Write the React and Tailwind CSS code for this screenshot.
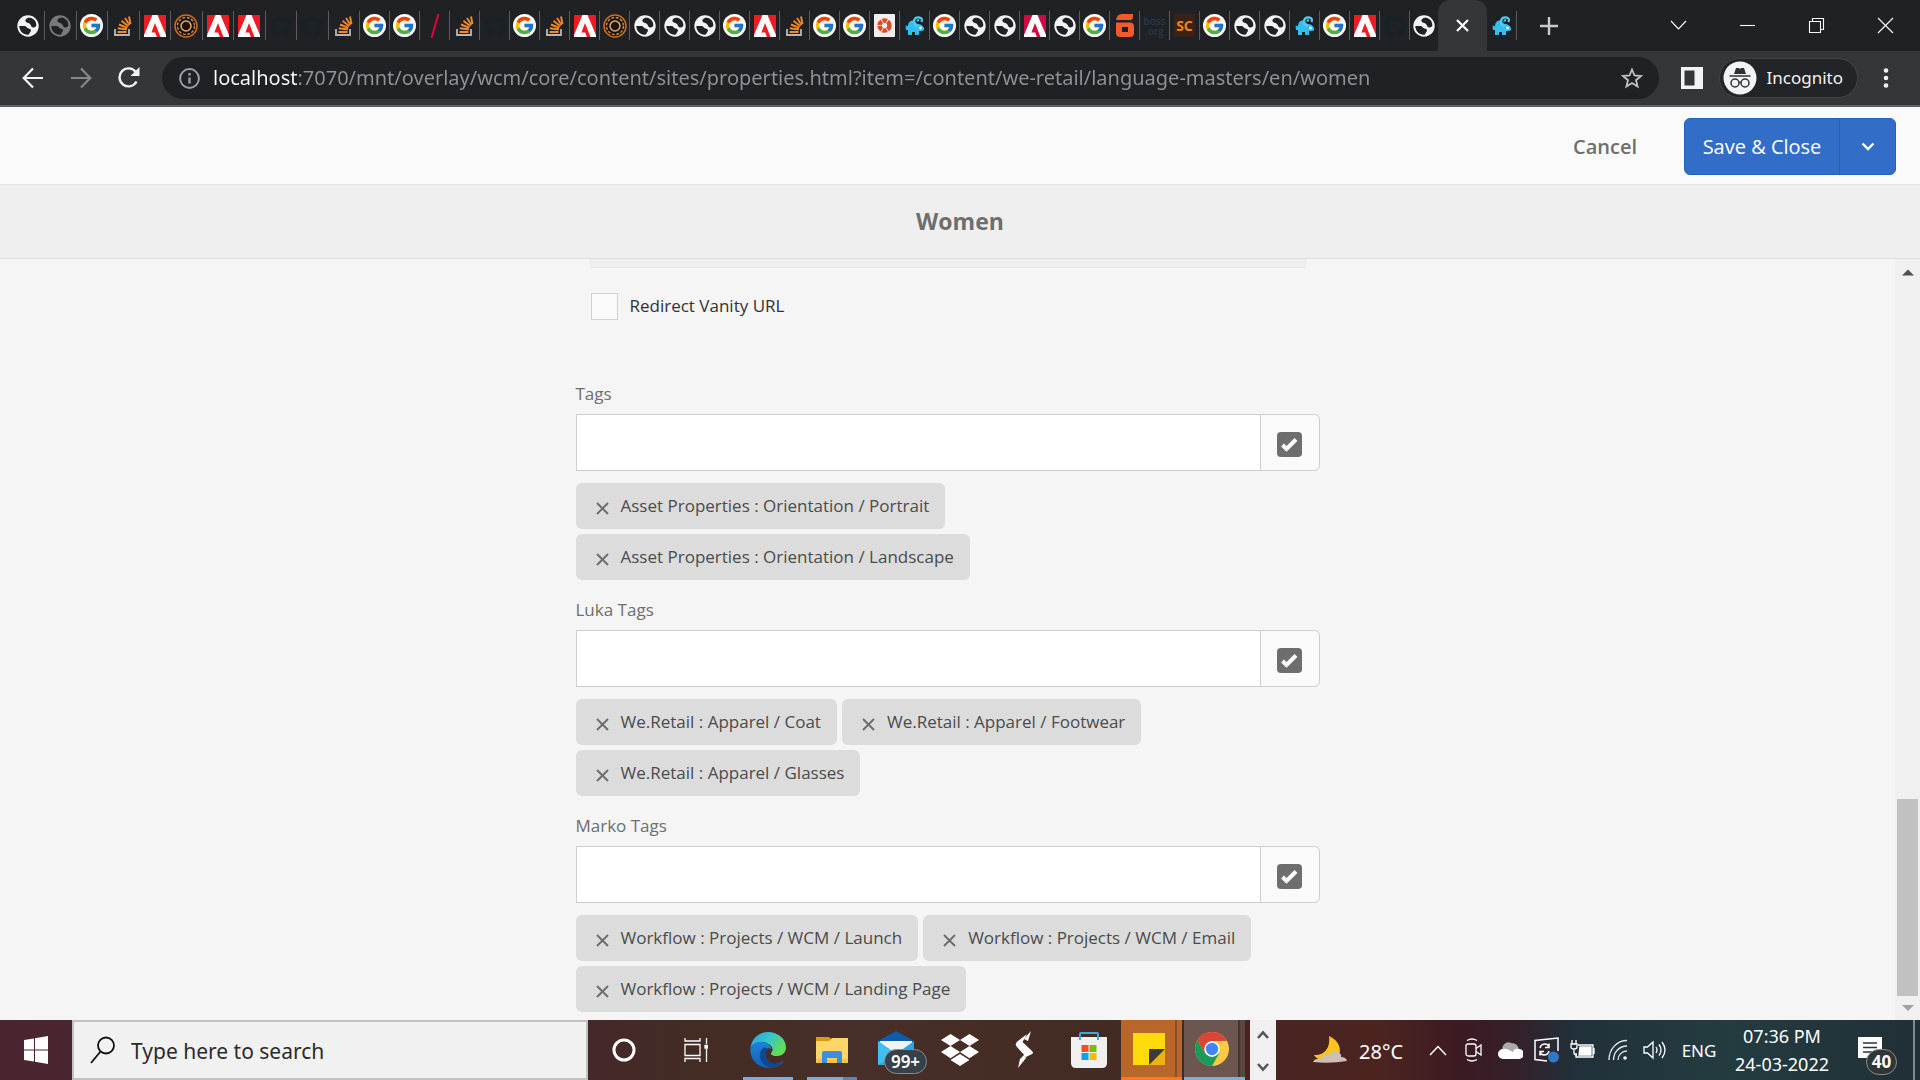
import { useState } from 'react';
import { FcGoogle } from 'react-icons/fc';
import { FaGithub, FaDropbox } from 'react-icons/fa';

const URL = 'localhost:7070/mnt/overlay/wcm/core/content/sites/properties.html?item=/content/we-retail/language-masters/en/women';

const FIRST_TABS = ['globeDim', 'google', 'stack', 'adobe', 'gold', 'adobe', 'adobe', 'github', 'github', 'stack'];

const TABS = [
  'google', 'google', 'slash', 'stack', 'github', 'google', 'stack', 'adobe', 'gold', 'globe', 'globe', 'globe',
  'google', 'adobe', 'stack', 'google', 'google', 'swirl', 'elephant', 'google', 'globe', 'globe', 'experience',
  'globe', 'google', 'bold', 'boss', 'sc', 'google', 'globe', 'globe', 'elephant', 'google', 'adobe', 'github',
];

const TAG_FIELDS = [
  { id: 'tags', label: 'Tags', tags: ['Asset Properties : Orientation / Portrait', 'Asset Properties : Orientation / Landscape'] },
  { id: 'luka', label: 'Luka Tags', tags: ['We.Retail : Apparel / Coat', 'We.Retail : Apparel / Footwear', 'We.Retail : Apparel / Glasses'] },
  { id: 'marko', label: 'Marko Tags', tags: ['Workflow : Projects / WCM / Launch', 'Workflow : Projects / WCM / Email', 'Workflow : Projects / WCM / Landing Page'] },
];

function Globe({ color = '#f1f3f4' }) {
  return (
    <svg width="22" height="22" viewBox="0 0 22 22">
      <circle cx="11" cy="11" r="10.700" fill={color} />
      <path d="M13 2.800C10 2.500 8 4.500 8.500 6.300c.5 1.700 3.500 1.500 4.500 2.700s1 3.200 3 3.400 3.300-1 3.300-2.400C19.300 6.500 17 3.500 13 2.800z" fill="#202124" />
      <path d="M2.300 11h4.700c2.800 0 2.600 2.200 4.700 2.500s3 1.700 1.800 3.200-1 2.800-2.700 3C6 19.500 2.500 16 2.300 11z" fill="#202124" />
    </svg>
  );
}

function Adobe({ color = '#ed1c24' }) {
  return (
    <svg width="22" height="22" viewBox="0 0 22 22">
      <rect width="22" height="22" fill={color} />
      <path d="M8.500 0h5l8.500 20v2H0v-2z" fill="#fff" />
      <path d="M11 8l5.500 14h-3.700l-1.600-4.500H7.400z" fill={color} />
    </svg>
  );
}

function Favicon({ kind }) {
  switch (kind) {
    case 'globe': return <Globe />;
    case 'globeDim': return <Globe color="#77797c" />;
    case 'google': return <span className="flex size-[23px] items-center justify-center rounded-full bg-white"><FcGoogle size={21} /></span>;
    case 'stack': return (
      <svg width="18" height="20" viewBox="0 0 18 20" fill="none">
        <path d="M1 13v6h14v-6" stroke="#b4b6b8" strokeWidth="1.800" />
        <path d="M3.500 16h9M3.800 12.300l9 1.200M5 8.500l8.300 3.300M7.500 4.800l6.800 5.500M11 2l4.500 7M15 .5l1.500 7.500" stroke="#f0882e" strokeWidth="1.900" />
      </svg>
    );
    case 'adobe': return <Adobe />;
    case 'experience': return <Adobe color="#cf0a43" />;
    case 'github': return <FaGithub size={22} className="text-[#182226]" />;
    case 'elephant': return (
      <svg width="20" height="20" viewBox="0 0 20 20" fill="none">
        <path d="M1 9q-1 2 0 5h2v5h4v-3h3v3h4v-4h2q4 0 3-3-2-4-6-4-3-1-3-4-7 0-7 6-1 1-2-1z" fill="#35bdee" />
        <path d="M16.500 6q1.500-4-2.500-4.700Q9 1 9 6q0 4 4 3.500M12.500 5.500q0-1.500 1.500-1" stroke="#4fcdf6" strokeWidth="2.200" />
        <circle cx="15.500" cy="12" r="1.400" fill="#dff6fd" />
      </svg>
    );
    case 'slash': return <svg width="22" height="24" viewBox="0 0 22 24"><path d="M14.500 0L7.500 24" stroke="#e4003c" strokeWidth="2" /></svg>;
    case 'gold': return (
      <svg width="24" height="24" viewBox="0 0 24 24" fill="none">
        <circle cx="12" cy="12" r="11" fill="#1a1008" stroke="#c9701a" strokeWidth="1.500" />
        <circle cx="12" cy="12" r="8.500" stroke="#b98a4c" strokeWidth="1.500" strokeDasharray="3 1.500" />
        <circle cx="12" cy="12" r="5" fill="#241204" stroke="#d8b078" strokeWidth="1.500" />
      </svg>
    );
    case 'swirl': return (
      <svg width="21" height="23" viewBox="0 0 21 23" fill="none">
        <rect width="21" height="23" rx="1" fill="#f4efec" />
        <circle cx="10.500" cy="11.500" r="5" stroke="#e2492b" strokeWidth="4.500" strokeDasharray="4.400 .84" />
      </svg>
    );
    case 'bold': return (
      <svg width="20" height="23" viewBox="0 0 20 23">
        <path d="M1 6Q2 0 7 0h11v3q0 3-3 3z" fill="#f15a29" />
        <path fillRule="evenodd" d="M1 8.500h14q4 0 4 4V19q0 4-4 4H5q-4 0-4-4zM7 13v5h6v-5z" fill="#f15a29" />
      </svg>
    );
    case 'boss': return <span className="w-[22px] text-center text-[10px] leading-[10px] font-semibold text-[#26384f]">boss .org</span>;
    case 'sc': return <span className="flex h-[23px] w-[21px] items-center justify-center bg-[#3a2216] font-['Noto_Sans'] text-[14px] font-bold text-[#f0811f]">SC</span>;
    default: return null;
  }
}

function Tab({ kind, className }) {
  return (
    <button className={`flex h-[29px] items-center justify-center overflow-hidden border-r border-[#5a5c60] ${className}`}>
      <Favicon kind={kind} />
    </button>
  );
}

function TabStrip() {
  return (
    <div className="flex h-[51px] shrink-0 items-center bg-[#202124]">
      <Tab kind="globe" className="w-[45px] pl-3" />
      <div className="flex w-[315px]">
        {FIRST_TABS.map((t, i) => <Tab key={i} kind={t} className="w-0 flex-1" />)}
      </div>
      {TABS.map((t, i) => <Tab key={i} kind={t} className="w-[30px]" />)}
      <button className="flex w-7 items-center justify-center"><Favicon kind="globe" /></button>
      <button className="flex h-full w-[49px] items-center justify-center rounded-t-xl bg-[#35363a]">
        <svg width="13" height="13" viewBox="0 0 13 13"><path d="M1 1l11 11M12 1L1 12" stroke="#fff" strokeWidth="2.200" /></svg>
      </button>
      <Tab kind="elephant" className="w-[30px]" />
      <button className="flex w-16 items-center justify-center">
        <svg width="18" height="18" viewBox="0 0 18 18"><path d="M9 0v18M0 9h18" stroke="#c8cacd" strokeWidth="2.400" /></svg>
      </button>
      <div className="ml-auto flex h-[43px]">
        <WindowButton><path d="M3 6l7.500 8L18 6" /></WindowButton>
        <WindowButton><path d="M3 10.500h15" /></WindowButton>
        <WindowButton><path d="M3.500 6.500h11v11h-11zM6.500 6.500v-3h11v11h-3" /></WindowButton>
        <WindowButton><path d="M3 3l15 15M18 3L3 18" /></WindowButton>
      </div>
    </div>
  );
}

function WindowButton({ children }) {
  return (
    <button className="flex w-[69px] items-center justify-center">
      <svg width="21" height="21" viewBox="0 0 21 21" fill="none" stroke="#fff" strokeWidth="1.100">{children}</svg>
    </button>
  );
}

function Toolbar() {
  return (
    <div className="flex h-14 shrink-0 items-center border-b-2 border-[#5f6165] bg-[#35363a] pl-[9px]">
      <button className="flex w-12 justify-center">
        <svg width="22" height="22" viewBox="0 0 22 22" fill="none" stroke="#f1f3f4" strokeWidth="2.200"><path d="M21 11H2M11 1.500L1.700 11l9.300 9.500" /></svg>
      </button>
      <button className="flex w-12 justify-center">
        <svg width="22" height="22" viewBox="0 0 22 22" fill="none" stroke="#85878a" strokeWidth="2.200"><path d="M1 11h19M11 1.500l9.300 9.500-9.300 9.500" /></svg>
      </button>
      <button className="flex w-12 justify-center">
        <svg width="22" height="22" viewBox="0 0 22 22"><path d="M18.500 14.500A9 9 0 1 1 17.600 4.800" fill="none" stroke="#f1f3f4" strokeWidth="2.400" /><path d="M21.500 0v9h-9z" fill="#f1f3f4" /></svg>
      </button>
      <div className="ml-[9px] flex h-[42px] flex-1 items-center rounded-full bg-[#202124] pr-4 pl-[17px]">
        <svg width="21" height="21" viewBox="0 0 21 21" fill="none" stroke="#9aa0a6" strokeWidth="2"><circle cx="10.500" cy="10.500" r="9.400" /><path d="M10.500 9.500v6M10.500 5v2.500" strokeWidth="2.400" /></svg>
        <input aria-label="Address and search bar" defaultValue={URL} className="ml-[13px] min-w-0 flex-1 bg-[linear-gradient(to_right,#fff_84px,#8f9296_84px)] bg-clip-text font-['Noto_Sans',sans-serif] text-[20px] leading-[30px] text-transparent outline-none" />
        <button aria-label="Bookmark this tab">
          <svg width="22" height="22" viewBox="0 0 22 22" fill="none" stroke="#c0c2c5" strokeWidth="1.800"><path d="M11 2.500l2.500 6 6.500.5-5 4.200 1.600 6.300-5.600-3.400-5.600 3.400L7 13.200 2 9l6.500-.5z" /></svg>
        </button>
      </div>
      <button aria-label="Side panel" className="ml-[22px]">
        <svg width="22" height="22" viewBox="0 0 22 22"><path fillRule="evenodd" d="M0 0h22v22H0zM3.500 3.500v15h10v-15z" fill="#f1f3f4" /></svg>
      </button>
      <button className="ml-4 flex h-10 items-center rounded-full border border-[#424347] bg-[#232427] pr-[14px] pl-[3px]">
        <svg width="34" height="34" viewBox="0 0 34 34" fill="none">
          <circle cx="17" cy="17" r="16.500" fill="#f1f3f4" />
          <path d="M11 13l2-6h2.500l1.500.7 1.500-.7H21l2 6z" fill="#303134" />
          <path d="M6.500 15h21" stroke="#303134" strokeWidth="1.500" />
          <circle cx="12" cy="22" r="4" stroke="#303134" strokeWidth="1.500" />
          <circle cx="22" cy="22" r="4" stroke="#303134" strokeWidth="1.500" />
          <path d="M16 21.500q1-.8 2 0" stroke="#303134" strokeWidth="1.300" />
        </svg>
        <span className="ml-[10px] font-['Noto_Sans',sans-serif] text-[17px] text-[#f1f3f4]">Incognito</span>
      </button>
      <button aria-label="Menu" className="flex w-[62px] justify-center pr-[6px]">
        <svg width="6" height="20" viewBox="0 0 6 20" fill="#f1f3f4"><circle cx="3" cy="2.500" r="2.300" /><circle cx="3" cy="10" r="2.300" /><circle cx="3" cy="17.500" r="2.300" /></svg>
      </button>
    </div>
  );
}

function ActionBar() {
  return (
    <div className="flex h-[78px] shrink-0 items-center justify-end border-b border-[#e1e1e1] bg-[#fafafa] pt-[2px] pr-6 text-[20px]">
      <button className="mr-[47px] font-semibold text-[#6e6e6e]">Cancel</button>
      <div className="flex h-[57px] overflow-hidden rounded-md border border-[#2562bd] bg-[#326ec8]">
        <button className="w-[154px] text-center font-medium text-white">Save &amp; Close</button>
        <button aria-label="More save options" className="flex w-14 items-center justify-center border-l border-[#2460bb]">
          <svg width="14" height="9" viewBox="0 0 14 9"><path d="M1.500 1.500L7 7l5.500-5.500" fill="none" stroke="#fff" strokeWidth="2.400" /></svg>
        </button>
      </div>
    </div>
  );
}

function TagField({ id, label, tags }) {
  return (
    <div className="pb-[18px]">
      <label htmlFor={id} className="block text-[17px] leading-6 text-[#6e6e6e]">{label}</label>
      <div className="mt-2 flex h-[57px]">
        <input id={id} className="min-w-0 flex-1 border border-[#cfcfcf] bg-white px-4 outline-none" />
        <button aria-label={`Browse ${label}`} className="flex w-[59px] items-center justify-center rounded-r-md border border-l-0 border-[#cfcfcf] bg-[#fafafa] pt-1">
          <svg width="25" height="25" viewBox="0 0 25 25"><rect width="25" height="25" rx="4" fill="#6e6e6e" /><path d="M5.500 13l4 4 9.500-9.500" fill="none" stroke="#fff" strokeWidth="4" /></svg>
        </button>
      </div>
      <ul className="mt-3 flex flex-wrap gap-[5px]">
        {tags.map(t => (
          <li key={t} className="flex h-[46px] items-center rounded-md bg-[#dcdcdc] pr-4 pl-5 text-[17px] text-[#4b4b4b]">
            <button aria-label={`Remove ${t}`} className="mt-1 mr-3">
              <svg width="13" height="13" viewBox="0 0 13 13"><path d="M1 1l11 11M12 1L1 12" stroke="#6e6e6e" strokeWidth="2" /></svg>
            </button>
            {t}
          </li>
        ))}
      </ul>
    </div>
  );
}

function Properties() {
  const [redirect, setRedirect] = useState(false);
  return (
    <div className="flex min-h-0 flex-1 bg-[#f5f5f5]">
      <div className="flex-1 overflow-hidden">
        <div className="mx-auto w-[744px]">
          <div className="mx-[14px] h-[9px] border border-t-0 border-[#e6e6e6] bg-[#efefef]" />
          <label className="mt-6 ml-[15px] flex w-fit items-center gap-3 text-[17px] leading-7 text-[#323232]">
            <input type="checkbox" checked={redirect} onChange={e => setRedirect(e.target.checked)} className="size-[27px] appearance-none border border-[#d0d0d0] bg-[#fafafa]" />
            Redirect Vanity URL
          </label>
          <div className="mt-[62px]">
            {TAG_FIELDS.map(f => <TagField key={f.id} {...f} />)}
          </div>
        </div>
      </div>
      {/* scrollbar */}
      <div className="flex w-[25px] flex-col items-center bg-[#f0f0f0] px-[2px] pt-2 pb-[6px]">
        <svg width="12" height="12" viewBox="0 0 12 12"><path d="M6 2.500l6 6H0z" fill="#505050" /></svg>
        <div className="mt-auto mb-[6px] h-[197px] w-full bg-[#c1c1c1]" />
        <svg width="12" height="12" viewBox="0 0 12 12"><path d="M0 3h12L6 9z" fill="#a0a0a0" /></svg>
      </div>
    </div>
  );
}

function Tray({ children }) {
  return <button className="flex w-9 items-center justify-center">{children}</button>;
}

function Taskbar() {
  return (
    <div className="flex h-[60px] shrink-0 bg-[linear-gradient(to_right,#4a2530_0,#45282a_31%,#432c24_36%,#482f29_44%,#432b23_58%,#4a2422_66%,#4b2420_72%,#3c1a22_76%,#34202a_79%,#21303a_82%,#233c40_90%,#212f36_100%)] font-['Noto_Sans',sans-serif] text-white">
      <button aria-label="Start" className="flex w-[72px] items-center justify-center">
        <svg width="24" height="28" viewBox="0 0 24 28" fill="#fff"><path d="M0 4l10-1.500v11H0zM11 2.300L24 0v13.500H11zM0 14.500h10v11L0 24zM11 14.500h13V28l-13-2.300z" /></svg>
      </button>
      <label className="flex w-[516px] items-center border-2 border-[#c2c2c2] bg-[#f1f1f1] pl-4">
        <svg width="25" height="28" viewBox="0 0 25 28" fill="none" stroke="#111" strokeWidth="1.800"><circle cx="16" cy="9.500" r="8" /><path d="M10.500 15.500L1 27" /></svg>
        <input placeholder="Type here to search" className="ml-4 min-w-0 flex-1 pt-1 text-[21px] outline-none placeholder:text-[#2b2b2b]" />
      </label>

      <button aria-label="Cortana" className="flex w-[72px] items-center justify-center">
        <svg width="24" height="24" viewBox="0 0 24 24"><circle cx="12" cy="12" r="10" fill="none" stroke="#fff" strokeWidth="3" /></svg>
      </button>
      <button aria-label="Task View" className="mr-1 flex w-[72px] items-center justify-center">
        <svg width="24" height="24" viewBox="0 0 24 24" fill="none" stroke="#fff" strokeWidth="1.300"><path d="M1 0v3h15V0M1 24v-3.500h15V24M1 6.500h15v11H1zM22.500 0v6M22.500 11v13" /><path d="M21 7.500h3v2.500h-3z" fill="#fff" /></svg>
      </button>
      <button aria-label="Edge" className="flex w-16 flex-col items-center pt-3">
        <svg width="36" height="36" viewBox="0 0 36 36">
          <defs>
            <linearGradient id="edgeTop" x1="0" x2="1" y2=".5"><stop stopColor="#2a9fdc" /><stop offset=".5" stopColor="#35c4cf" /><stop offset="1" stopColor="#65dc55" /></linearGradient>
            <linearGradient id="edgeLow" y2="1" x2="0"><stop stopColor="#1b84d6" /><stop offset="1" stopColor="#1560b5" /></linearGradient>
          </defs>
          <path d="M.5 16C1.500 6.500 9 0 18 0c10 0 18 7 18 15.500 0 5-4 8.500-9 8.500-4.500 0-6.500-1.800-6-3 2-2 2-4.500.5-6.500C19 11 14.500 9.500 10.500 10 6 10.500 2 12.500.5 16z" fill="url(#edgeTop)" />
          <path d="M.3 17C2 11 8 9 13 9.800c4.500.7 8 3.700 8.500 7.200-4-2.500-8 1-7.500 6 .7 6 6 9.500 11.500 9 3-.3 5.500-1.500 7-2.500.8-.4 1.200.2.8.8C30 34 24.500 36 19 36 8 36 0 28 .3 17z" fill="url(#edgeLow)" />
          <path d="M14 15.500c-4 2.500-5.500 8-3 13 2 4 6 7 10.500 7.200 5-.7 9-2.700 12-6-6 4-13 2-16-2-2.500-3.500-2.500-8 0-10.500-1-1.500-2.500-2-3.500-1.700z" fill="#0d4a95" />
        </svg>
        <span className="mt-[9px] h-[3px] w-[50px] bg-[#76aee3]" />
      </button>
      <button aria-label="File Explorer" className="flex w-16 flex-col items-center pt-4">
        <svg width="32" height="28" viewBox="0 0 32 28"><path d="M0 1h13l3 3-3 3H0z" fill="#d99b0c" /><path d="M0 5h13l3-3h16v25H0z" fill="#ffd567" /><path d="M0 23h32v4H0z" fill="#f6c443" /><path d="M6 27V17q0-2 2-2h16q2 0 2 2v10h-5v-5H11v5z" fill="#3a8fdc" /></svg>
        <span className="mt-[13px] h-[3px] w-[50px] border-r-[14px] border-[#5788b5] bg-[#76aee3]" />
      </button>
      <button aria-label="Mail" className="relative flex w-16 items-center justify-center pb-1">
        <svg width="36" height="34" viewBox="0 0 36 34"><path d="M0 10L18 0l18 10v8H0z" fill="#0f5cab" /><path d="M2 10h32v10H2z" fill="#eef4f8" /><path d="M0 10l18 13L36 10v24H0z" fill="#2aa6e2" /><path d="M0 10l18 13L0 34z" fill="#41bff0" /></svg>
        <span className="absolute top-[29px] left-5 flex h-[25px] w-[43px] items-center justify-center rounded-full border border-[#8b8b8b] bg-[#37414a] text-[17px] font-semibold">99+</span>
      </button>
      <button aria-label="Dropbox" className="flex w-16 items-center justify-center"><FaDropbox size={38} /></button>
      <button aria-label="Editor" className="flex w-16 items-center justify-center">
        <svg width="18" height="38" viewBox="0 0 18 38" fill="#fff"><path d="M12 3L3 10q-4 3-1 6l9 10 6-3q2-1 0-3L7.500 11z" /><path d="M11 27L3 37l2-9 5-5z" /><path d="M16 0l-3 10-4-2z" /></svg>
      </button>
      <button aria-label="Microsoft Store" className="flex w-[65px] items-center justify-center">
        <svg width="36" height="36" viewBox="0 0 36 36"><path d="M0 5h36v26q0 5-5 5H5q-5 0-5-5z" fill="#f0f0f0" /><path d="M9 8V2q0-1 1-1h16q1 0 1 1v6" fill="none" stroke="#3aa9dc" strokeWidth="2" /><path d="M10.500 13h7v7h-7z" fill="#f25022" /><path d="M18.500 13h7v7h-7z" fill="#7fba00" /><path d="M10.500 21h7v7h-7z" fill="#00a4ef" /><path d="M18.500 21h7v7h-7z" fill="#ffb900" /></svg>
      </button>
      <button aria-label="Sticky Notes" className="flex w-[61px] items-center border-b-[3px] border-[#ff7a0c] bg-[linear-gradient(to_right,#b9662a_54px,#8f4e22_54px,#8f4e22_56px,#b9662a_56px)] pl-3">
        <svg width="32" height="32" viewBox="0 0 32 32"><rect width="32" height="32" fill="#ffdb0a" /><path d="M16 16h16v16H16z" fill="#eeb310" /><path d="M16 16h16L16 32z" fill="#3b3b3b" /></svg>
      </button>
      <button aria-label="Chrome" className="ml-[2px] flex w-[61px] items-center border-b-[3px] border-[#76b0e6] bg-[linear-gradient(to_right,#6d5650_54px,#46352f_54px,#46352f_56px,#5b4741_56px)] pl-[11px]">
        <svg width="34" height="34" viewBox="0 0 34 34">
          <circle cx="17" cy="17" r="17" fill="#fcc945" />
          <path d="M17 9h14.900A17 17 0 0 0 2.300 8.500L10 21z" fill="#dc4437" />
          <path d="M2.300 8.500A17 17 0 0 0 17 34l7.400-13-7.400 4-7-4z" fill="#1a9c58" />
          <circle cx="17" cy="17" r="7.700" fill="#fff" /><circle cx="17" cy="17" r="6.200" fill="#4285f4" />
        </svg>
      </button>
      <div className="ml-[5px] flex w-[26px] flex-col items-center justify-between bg-[#f0f0f0] pt-[10px] pb-2">
        <button aria-label="Scroll up"><svg width="12" height="10" viewBox="0 0 12 10"><path d="M1 8l5-5.500L11 8" fill="none" stroke="#555" strokeWidth="2.600" /></svg></button>
        <button aria-label="Scroll down"><svg width="12" height="10" viewBox="0 0 12 10"><path d="M1 2l5 5.500L11 2" fill="none" stroke="#555" strokeWidth="2.600" /></svg></button>
      </div>

      <div className="ml-auto flex">
        <button className="flex w-[108px] items-center text-[20px]">
          <svg width="35" height="30" viewBox="0 0 35 30"><path d="M17 1c9 4 14 13 9 21-4 6-19 6-24-2 9 1 17-6 15-19z" fill="#fbc51c" /><path d="M1 27q2-4 8-3 2-6 8-4 3-6 9-3 4 2 3 5 5 0 6 4-17 3-34 1z" fill="#cdbfb6" /></svg>
          <span className="ml-3 pt-1">28°C</span>
        </button>
        <Tray><svg width="18" height="11" viewBox="0 0 18 11"><path d="M1 10l8-8.500 8 8.500" fill="none" stroke="#fff" strokeWidth="1.500" /></svg></Tray>
        <Tray><svg width="18" height="24" viewBox="0 0 18 24" fill="none" stroke="#fff" strokeWidth="1.300"><rect x="1" y="6" width="10" height="12" rx="2" /><path d="M11 10.500l5-3.500v10l-5-3.500M2 2.500q5-3 10 0M2 21.500q5 3 10 0" /></svg></Tray>
        <Tray><svg width="25" height="18" viewBox="0 0 25 18"><path d="M5 10a6 6 0 0 1 8-8 8 8 0 0 1 8 6L5 15z" fill="#aaa" /><path d="M5 18a5 5 0 0 1 0-10q3-1 6 1l4 2q1-4 6-3a5 5 0 0 1 0 10z" fill="#fff" /></svg></Tray>
        <Tray><svg width="25" height="26" viewBox="0 0 25 26" fill="none" stroke="#fff" strokeWidth="1.500"><path d="M13 24L1 22.500V3.500L24 1v13" /><path d="M6 11q1-4 5-4 3 0 4 3M15 6.500v4h-4M15 14q-1 4-5 4-3 0-4-3M6 18.500v-4h4" /><circle cx="19.500" cy="20" r="5.500" fill="#2e78c7" stroke="none" /></svg></Tray>
        <Tray><svg width="25" height="20" viewBox="0 0 25 20" fill="none" stroke="#fff" strokeWidth="1.300"><path d="M8 5h15v12H6v-4M24 8v6M2 0v4M6 0v4M1 4h6v3q0 2-3 2t-3-2zM4 9v4q0 2 3 2" /><path d="M10 7h11v8H9z" fill="#fff" /></svg></Tray>
        <Tray><svg width="20" height="22" viewBox="0 0 20 22" fill="none" stroke="#dfe5e6" strokeWidth="1.400"><path d="M1 21C1 10 9 1.500 19 1.500M5.500 21c0-8 6-14 13.500-14M10 21c0-5 4-9 9-9" /><circle cx="17" cy="19" r="1.800" fill="#fff" stroke="none" /></svg></Tray>
        <Tray><svg width="23" height="20" viewBox="0 0 23 20" fill="none" stroke="#fff" strokeWidth="1.300"><path d="M1 7h3.500L10 2v16l-5.500-5H1zM13 7q2 3 0 6M16 4.500q4 5.500 0 11M19 2q6 8 0 16" /></svg></Tray>
        <button className="w-[54px] pt-[2px] text-center text-[17px]">ENG</button>
        <button className="w-28 text-center text-[18px] leading-7">07:36 PM<br />24-03-2022</button>
        <button aria-label="Notifications" className="relative w-[75px] pl-5">
          <svg width="24" height="26" viewBox="0 0 24 26"><path d="M0 0h24v21h-9l-5 5v-5H0z" fill="#fff" /><path d="M5 6h14M5 10.500h14M5 15h10" stroke="#24343a" strokeWidth="1.500" /></svg>
          <span className="absolute top-[29px] left-7 flex h-[26px] w-[31px] items-center justify-center rounded-full border border-[#8b8b8b] bg-[#303536] text-[17px] font-bold">40</span>
        </button>
        <span className="mr-[5px] w-[2px] bg-[#7f8a8e]" />
      </div>
    </div>
  );
}

export default function App() {
  return (
    <div className="flex h-screen flex-col overflow-hidden font-['Open_Sans',sans-serif]">
      <TabStrip />
      <Toolbar />
      <ActionBar />
      <h1 className="flex h-[74px] shrink-0 items-center justify-center border-b border-[#dedede] bg-[#efefef] text-[23px] font-bold text-[#6e6e6e]">Women</h1>
      <Properties />
      <Taskbar />
    </div>
  );
}
